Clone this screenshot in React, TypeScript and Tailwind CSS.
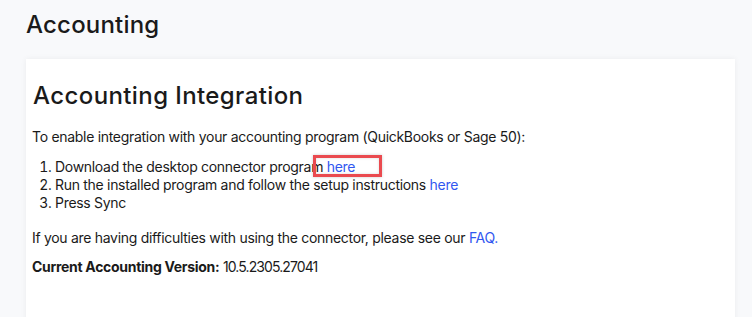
export default function App() {
  const link = "text-[#3157f0]";
  return (
    <div className="h-[317px] overflow-hidden bg-[#f8f9fb] text-[#1a1a1a]" style={{ fontFamily: "Inter, 'Open Sans', sans-serif" }}>
      <div className="pl-[26px] pr-[17px] pt-[9px]">
        <h1 className="text-[24px] leading-[32px] font-medium tracking-[0.2px]">Accounting</h1>
        <div className="mt-[18px] h-[300px] bg-white px-[6px] pt-[21px] shadow-[0_0_6px_rgba(0,0,0,0.06)]">
          <h2 className="text-[24px] leading-[32px] font-medium tracking-[0.4px] pl-[1px]">Accounting Integration</h2>
          <div className="text-[14px] leading-[18px] tracking-[-0.3px]">
            <p className="mt-[16px]">To enable integration with your accounting program (QuickBooks or Sage 50):</p>
            <ol className="mt-[12px] list-decimal pl-[23px]">
              <li>
                Download the desktop connector program{" "}
                <span className="relative inline-block leading-[18px]">
                  <a className={link} href="#">here</a>
                  <span className="absolute -left-[14px] -top-[3px] h-[22px] w-[69px] border-[3px] border-[#ea4a4f] shadow-[0_0_3px_rgba(0,0,0,0.2),inset_0_0_3px_rgba(0,0,0,0.15)]" />
                </span>
              </li>
              <li>
                Run the installed program and follow the setup instructions <a className={link} href="#">here</a>
              </li>
              <li>Press Sync</li>
            </ol>
            <p className="mt-[17px]">
              If you are having difficulties with using the connector, please see our <a className={link} href="#">FAQ.</a>
            </p>
            <p className="mt-[11px]">
              <span className="font-bold">Current Accounting Version:</span>{" "}
              <span className="tracking-[-0.9px]">10.5.2305.27041</span>
            </p>
          </div>
        </div>
      </div>
    </div>
  );
}
